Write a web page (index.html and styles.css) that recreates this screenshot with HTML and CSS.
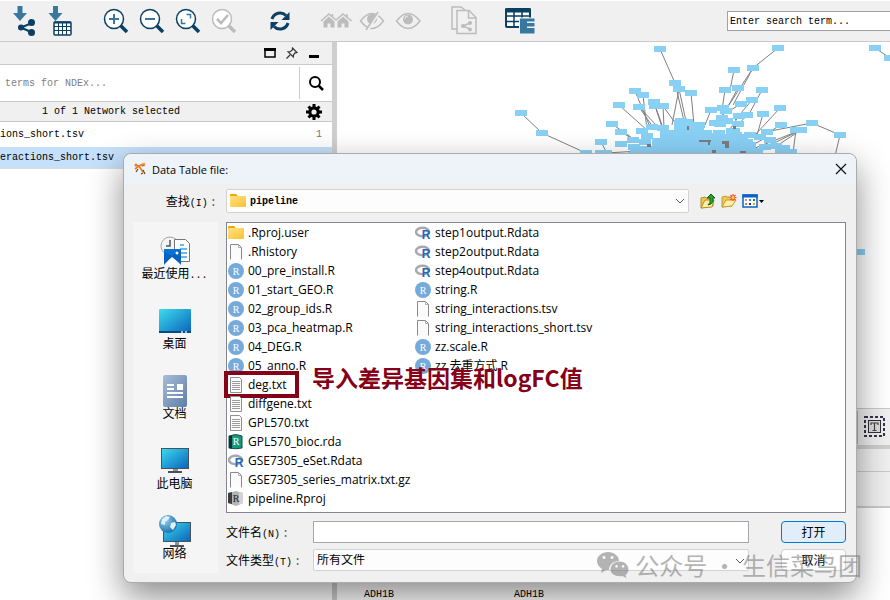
FILE: index.html
```html
<!DOCTYPE html>
<html lang="zh-CN">
<head>
    <meta charset="UTF-8">
    <meta name="viewport" content="width=device-width, initial-scale=1.0">
    <title>Data Table file</title>
    <link rel="stylesheet" href="styles.css">
</head>
<body>
    <!-- Shared icons -->
    <svg class="sprite" aria-hidden="true">
        <defs>
            <linearGradient id="folder-fill" x1="0" y1="0" x2="1" y2="1">
                <stop offset="0" stop-color="#ffe08a"/><stop offset="1" stop-color="#fcc22e"/>
            </linearGradient>
            <linearGradient id="screen-fill" x1="0" y1="0" x2="1" y2="1">
                <stop offset="0" stop-color="#3bdcec"/><stop offset="1" stop-color="#0b62bd"/>
            </linearGradient>
            <linearGradient id="doc-fill" x1="0" y1="0" x2="1" y2="1">
                <stop offset="0" stop-color="#a9bdd6"/><stop offset="1" stop-color="#5c7ea8"/>
            </linearGradient>
            <radialGradient id="globe-fill" cx="0.35" cy="0.3" r="0.8">
                <stop offset="0" stop-color="#8fd0ee"/><stop offset="1" stop-color="#1565a5"/>
            </radialGradient>
        </defs>
        <symbol id="folder" viewBox="0 0 16 16">
            <path d="M0 2q0-1 1-1h5l2 2h7v3H0z" fill="#f2a900"/>
            <rect x="0" y="3" width="16" height="11" rx="1" fill="url(#folder-fill)"/>
        </symbol>
        <symbol id="blank" viewBox="0 0 16 16">
            <path d="M2.500 15.500v-15h8l3 3v12" fill="#fbfbfb" stroke="#8a8a8a"/>
            <path d="M10.500 .5v3h3" fill="none" stroke="#b0b0b0"/>
        </symbol>
        <symbol id="text" viewBox="0 0 16 16">
            <path d="M2.500 .5h9l2 2v13h-11z" fill="#fafafa" stroke="#8f8f8f"/>
            <path d="M4 4.500h8M4 6.500h8M4 8.500h8M4 10.500h8M4 12.500h8" stroke="#9c9c9c"/>
        </symbol>
        <symbol id="rscript" viewBox="0 0 16 16">
            <circle cx="8" cy="8" r="8" fill="#75aadb"/>
            <text x="8" y="12" class="r-letter" fill="#fff">R</text>
        </symbol>
        <symbol id="rdata" viewBox="0 0 16 16">
            <ellipse cx="7.500" cy="7" rx="6.500" ry="4.300" fill="none" stroke="#a7a9b0" stroke-width="2.600"/>
            <text x="11" y="14" class="r-bold" fill="#2467bb">R</text>
        </symbol>
        <symbol id="rda" viewBox="0 0 16 16">
            <path d="M1 2q7-3 13 0v12q-6 1.500-13 0z" fill="#149a80" stroke="#174b43"/>
            <path d="M1 2v12l3 .5V2z" fill="#12322e"/>
            <text x="8" y="11" class="r-letter" fill="#fff">R</text>
        </symbol>
        <symbol id="rproj" viewBox="0 0 16 16">
            <path d="M0 2l8-2 7 2v10l-7 3-8-3z" fill="#b4b4b4"/>
            <path d="M0 2l4-1v12l-4-1z" fill="#3e3e3e"/><path d="M11 1l4 1v10l-4 2z" fill="#d2d2d2"/>
            <text x="8" y="11" class="r-letter" fill="#222">R</text>
        </symbol>
        <symbol id="lens" viewBox="0 0 32 32">
            <circle cx="14" cy="14" r="9.500" fill="#fff" stroke="currentColor" stroke-width="1.500"/>
            <path d="M20.500 20.500l6.500 6.500" stroke="currentColor" stroke-width="3.600"/>
        </symbol>
        <symbol id="chevron" viewBox="0 0 10 6">
            <path d="M1 1l4 4 4-4" fill="none" stroke="#555"/>
        </symbol>
    </svg>

    <!-- Toolbar -->
    <header class="toolbar">
        <div class="tools">
            <button aria-label="Import network"><svg viewBox="0 0 32 32">
                <path d="M9.500 1h5v7H19l-7 8-7-8h4.500z" fill="#38789f"/>
                <path d="M24 18l-11 4.500L24 27.500" fill="none" stroke="#0b3f63" stroke-width="2"/>
                <g fill="#0b3f63"><circle cx="13" cy="22.500" r="3"/><circle cx="23.500" cy="17.500" r="3.500"/><circle cx="23.500" cy="27.500" r="3.500"/></g>
            </svg></button>
            <button aria-label="Import table"><svg viewBox="0 0 32 32">
                <path d="M9 1h5v7h4.500l-7 8-7-8H9z" fill="#38789f"/>
                <rect x="10" y="17" width="17" height="13" rx="1" fill="#fff" stroke="#0b3f63" stroke-width="1.500"/>
                <path d="M10 17.500h17" stroke="#0b3f63" stroke-width="2"/>
                <path d="M10 21.500h17M10 25.500h17M14.500 17v13M18.500 17v13M22.500 17v13" stroke="#0b3f63"/>
            </svg></button>
        </div>
        <div class="tools">
            <button aria-label="Zoom in"><svg viewBox="0 0 32 32"><use href="#lens"/><path d="M14 9v10M9 14h10" stroke="#38789f" stroke-width="2"/></svg></button>
            <button aria-label="Zoom out"><svg viewBox="0 0 32 32"><use href="#lens"/><path d="M9 14h10" stroke="#38789f" stroke-width="2"/></svg></button>
            <button aria-label="Fit content"><svg viewBox="0 0 32 32"><use href="#lens"/><path d="M14.500 9.500h4v4M9.500 14v4.500h4" fill="none" stroke="#38789f" stroke-width="1.500"/></svg></button>
            <button class="off" aria-label="Fit selected"><svg viewBox="0 0 32 32"><use href="#lens"/><path d="M9 14l4 4 7-8" fill="none" stroke="#bcbcbc" stroke-width="2.600"/></svg></button>
        </div>
        <div class="tools">
            <button aria-label="Apply layout"><svg viewBox="0 0 32 32">
                <path d="M8 14a8.300 8.300 0 0 1 14-3.500M24 18a8.300 8.300 0 0 1-14 3.500" fill="none" stroke="#0b3f63" stroke-width="3"/>
                <path d="M25.500 7v8h-8zM6.500 25v-8h8z" fill="#0b3f63"/>
            </svg></button>
        </div>
        <div class="tools off">
            <button aria-label="First neighbors"><svg viewBox="0 0 32 32" fill="#bcbcbc">
                <path d="M3.500 16.500L9 11.500l5.500 5v6h-4v-4h-3v4h-4z"/><path d="M17.500 16.500l5.500-5 5.500 5v6h-4v-4h-3v4h-4z"/>
                <path d="M1 16l8-7 7 6 7-6 8.500 7M12.500 9v4M27 9v4" fill="none" stroke="#bcbcbc" stroke-width="1.500"/>
            </svg></button>
            <button aria-label="Hide selected"><svg viewBox="0 0 32 32">
                <path d="M4.500 16q11.500-15 23 0-11.500 15-23 0z" fill="none" stroke="#bcbcbc" stroke-width="1.500"/>
                <circle cx="16" cy="14" r="5" fill="#bcbcbc"/><path d="M23 7L11 26" stroke="#f0f0f0" stroke-width="3"/><path d="M22 7L10 25" stroke="#bcbcbc" stroke-width="1.500"/>
            </svg></button>
            <button aria-label="Show all"><svg viewBox="0 0 32 32">
                <path d="M4.500 16q11.500-15 23.500 0-12 15-23.500 0z" fill="none" stroke="#bcbcbc" stroke-width="1.500"/>
                <circle cx="16" cy="14.500" r="5" fill="#bcbcbc"/><path d="M13 14q0-3 3-3" fill="none" stroke="#f0f0f0"/>
            </svg></button>
        </div>
        <div class="tools off">
            <button aria-label="New network from selection"><svg viewBox="0 0 32 32" fill="none" stroke="#bcbcbc" stroke-width="1.500">
                <path d="M9 24H4V2h9l4 3"/><path d="M9 5.500h12l7 7V28.500H9z" fill="#f0f0f0"/><path d="M20.500 6v7H28"/>
                <path d="M22 18l-7 3 7 3"/><g fill="#bcbcbc" stroke="none"><circle cx="22" cy="18" r="2"/><circle cx="15" cy="21" r="2"/><circle cx="22" cy="24.500" r="2"/></g>
            </svg></button>
        </div>
        <div class="tools">
            <button aria-label="Table browser"><svg viewBox="0 0 32 32">
                <rect x="2" y="4" width="24" height="18" rx="1" fill="#fff" stroke="#0b3f63" stroke-width="2"/>
                <path d="M1 5.500h26" stroke="#0b3f63" stroke-width="4"/>
                <path d="M2 11h24M2 16.500h24M10 5v17M18 5v17" stroke="#0b3f63" stroke-width="1.500"/>
                <path d="M15 12.500h17V30H15z" fill="#f0f0f0"/><path d="M16 13.500h14.500v3H23v1.500h7.500v3.500H23V23h7.500v5.500H16z" fill="#38789f"/>
            </svg></button>
        </div>
        <input class="search" type="text" aria-label="Search" value="Enter search term...">
    </header>

    <main class="workspace">
        <!-- Network panel -->
        <section class="networks">
            <div class="panel-head">
                <svg width="12" height="12" viewBox="0 0 12 12"><rect x="1" y="2" width="10" height="8" fill="none" stroke="#000" stroke-width="1.500"/><path d="M0 2.500h12" stroke="#000" stroke-width="3"/></svg>
                <svg width="12" height="12" viewBox="0 0 12 12"><path d="M6.500 1l4.500 4.500-2 .3L7.500 8l-.2 2L2 4.700 4.500 4.500 6.300 3zM4 8L.5 11.500" fill="none" stroke="#333" stroke-width="1.200"/></svg>
                <svg width="12" height="12" viewBox="0 0 12 12"><path d="M1 9.500h10" stroke="#000" stroke-width="3"/></svg>
            </div>
            <div class="ndex">
                <input type="text" aria-label="NDEx" placeholder="terms for NDEx...">
                <button aria-label="Search NDEx"><svg width="16" height="16" viewBox="0 0 16 16"><circle cx="7" cy="7" r="5" fill="none" stroke="#000" stroke-width="2"/><path d="M10.500 10.500l4.500 4.500" stroke="#000" stroke-width="2.500"/></svg></button>
            </div>
            <div class="selected">
                <span>1 of 1 Network selected</span>
                <svg width="16" height="16" viewBox="0 0 16 16"><circle cx="8" cy="8" r="4.200" fill="none" stroke="#000" stroke-width="3.200"/><path d="M8 0v3M8 13v3M0 8h3M13 8h3M2.500 2.500l2 2M11.500 11.500l2 2M13.500 2.500l-2 2M4.500 11.500l-2 2" stroke="#000" stroke-width="3"/></svg>
            </div>
            <div class="net"><span>ions_short.tsv</span><i>1</i></div>
            <div class="net current"><span>eractions_short.tsv</span><i>1047</i><i>11297</i></div>
        </section>

        <section class="view">
            <div class="canvas"><svg id="graph" width="553" height="366" viewBox="337 42 553 366"></svg></div>
            <div class="view-bar">
                <span class="view-tab"></span>
                <svg width="22" height="22" viewBox="0 0 22 22"><rect x="1" y="1" width="19" height="19" fill="none" stroke="#33334d" stroke-width="2" stroke-dasharray="3 2"/><rect x="4.500" y="4.500" width="12" height="12" fill="#ddd" stroke="#333"/><path d="M7 9V7h7v2M10.500 7v7.500M8.500 14.500h4" fill="none" stroke="#444" stroke-width="1.200"/></svg>
            </div>
            <div class="table-head"></div>
            <div class="table-tools"></div>
            <div class="table-body"><span>ADH1B</span><span>ADH1B</span></div>
        </section>
    </main>

    <!-- File dialog -->
    <div class="dialog" role="dialog" aria-label="Data Table file:">
        <div class="title-bar">
            <svg width="14" height="14" viewBox="0 0 14 14"><path d="M2 3l4 1 4-2M2 7l4-3 4 6" fill="none" stroke="#e87d1e" stroke-width="1.600"/><path d="M9 4l3-1M3 10l2-3M10 8l2 4M8 12l2-1" stroke="#70401c" stroke-width="1.200"/><circle cx="11" cy="2" r="1.500" fill="#f4a63a"/><circle cx="3" cy="3" r="1.500" fill="#e87d1e"/></svg>
            <span>Data Table file:</span>
            <button class="close" aria-label="Close"><svg width="12" height="12" viewBox="0 0 12 12"><path d="M1 1l10 10M11 1L1 11" stroke="#111" stroke-width="1.200"/></svg></button>
        </div>
        <div class="look-in">
            <label for="folder-select">查找<small>(I)</small><b>:</b></label>
            <div class="combo with-icon">
                <svg class="combo-icon" width="16" height="16"><use href="#folder"/></svg>
                <select id="folder-select"><option>pipeline</option></select>
                <svg class="arrow" width="10" height="6"><use href="#chevron"/></svg>
            </div>
            <div class="nav">
                <button aria-label="Up one level"><svg width="16" height="16" viewBox="0 0 16 16"><path d="M1 15V5l4-1 1 1h6l1 2v6z" fill="#edc757" stroke="#b38c2b"/><path d="M1 15l4-8h9l-2 7z" fill="#fff0a5" stroke="#b38c2b"/><path d="M8 12q3-2 2-7H7l4-4 4 4h-2q1 6-5 7z" fill="#28a228" stroke="#12651b"/></svg></button>
                <button aria-label="New folder"><svg width="16" height="16" viewBox="0 0 16 16"><path d="M1 14V4l4-1 1 1h5v9z" fill="#edc757" stroke="#c39b35"/><path d="M1 14l4-7h10l-4 6z" fill="#fff0a5" stroke="#c39b35"/><path d="M12 1v7M8.500 4.500h7M9.500 2l5 5M14.500 2l-5 5" stroke="#f0502a" stroke-width="1.200"/><circle cx="12" cy="4.500" r="1.500" fill="#ffd25a"/></svg></button>
                <button aria-label="View menu"><svg width="24" height="16" viewBox="0 0 24 16"><rect x="1" y="2" width="14" height="12" fill="#fff" stroke="#0a62c4" stroke-width="1.500"/><path d="M.3 3h15.400" stroke="#0a62c4" stroke-width="3"/><path d="M3 6h2v2H3z" fill="#a09ac4"/><path d="M7 6h2v2H7z" fill="#2b8ce6"/><path d="M11 6h2v2h-2z" fill="#17921b"/><path d="M3 10h2v2H3z" fill="#f07346"/><path d="M7 10h2v2H7z" fill="#163a9c"/><path d="M11 10h2v2h-2z" fill="#d8a21b"/><path d="M17 7h5l-2.500 3z"/></svg></button>
            </div>
        </div>
        <div class="dialog-body">
            <nav class="places">
                <button>
                    <svg width="32" height="32" viewBox="0 0 32 32"><circle cx="11" cy="11" r="9" fill="#f4f4f4" stroke="#a5a5a5"/><path d="M11 5v6H7" fill="none" stroke="#555" stroke-width="1.500"/><path d="M15.500 4.500h11l4 4v18h-15z" fill="#fff" stroke="#777"/><path d="M21 10h4M21 14h7M21 18h7M21 22h7" stroke="#3ba4e8" stroke-width="1.500"/><path d="M5 14h17v16H5z" fill="#0873d4"/><path d="M5 30l8-9 9 9z" fill="#fff"/><path d="M5 29V17l8 4 6-6 3 3v11l-9-7z" fill="#0562bd"/><circle cx="18" cy="18" r="1.500" fill="#fff"/></svg>
                    <span>最近使用<small>...</small></span>
                </button>
                <button>
                    <svg width="32" height="32" viewBox="0 0 32 32"><rect x="0" y="4" width="32" height="24" rx="1" fill="url(#screen-fill)"/><path d="M0 27h32" stroke="#0a4a80" stroke-width="2"/><path d="M22 27h2M26 27h2" stroke="#cfe6f5" stroke-width="1.500"/></svg>
                    <span>桌面</span>
                </button>
                <button>
                    <svg width="32" height="32" viewBox="0 0 32 32"><rect x="4" y="0" width="24" height="32" rx="2" fill="url(#doc-fill)"/><path d="M8 10h7M8 14h7M8 18h16M8 22h16" stroke="#fff" stroke-width="2"/><path d="M18 9h6v6h-6z" fill="#fff"/></svg>
                    <span>文档</span>
                </button>
                <button>
                    <svg width="32" height="32" viewBox="0 0 32 32"><path d="M14 23h5v4h-5z" fill="#8d959c"/><path d="M9 27h14" stroke="#48525c" stroke-width="2"/><rect x="2.500" y="3.500" width="27" height="20" fill="url(#screen-fill)" stroke="#48525c"/></svg>
                    <span>此电脑</span>
                </button>
                <button>
                    <svg width="32" height="32" viewBox="0 0 32 32"><path d="M16 26h4v4h-4z" fill="#8d959c"/><path d="M11 31h14" stroke="#48525c" stroke-width="2"/><rect x="4.500" y="7.500" width="27" height="19" fill="url(#screen-fill)" stroke="#48525c"/><circle cx="9" cy="9" r="9" fill="url(#globe-fill)"/><path d="M3 4l4-3 4 1-2 3-3 2v3l-4-1zM12 8l4-1 1 3-3 5-3-3z" fill="#dff1f7"/></svg>
                    <span>网络</span>
                </button>
            </nav>
            <div class="picker">
                <ul class="files">
                    <li><svg><use href="#folder"/></svg>.Rproj.user</li>
                    <li><svg><use href="#blank"/></svg>.Rhistory</li>
                    <li><svg><use href="#rscript"/></svg>00_pre_install.R</li>
                    <li><svg><use href="#rscript"/></svg>01_start_GEO.R</li>
                    <li><svg><use href="#rscript"/></svg>02_group_ids.R</li>
                    <li><svg><use href="#rscript"/></svg>03_pca_heatmap.R</li>
                    <li><svg><use href="#rscript"/></svg>04_DEG.R</li>
                    <li><svg><use href="#rscript"/></svg>05_anno.R</li>
                    <li class="marked"><svg><use href="#text"/></svg>deg.txt<strong class="note">导入差异基因集和logFC值</strong></li>
                    <li><svg><use href="#text"/></svg>diffgene.txt</li>
                    <li><svg><use href="#text"/></svg>GPL570.txt</li>
                    <li><svg><use href="#rda"/></svg>GPL570_bioc.rda</li>
                    <li><svg><use href="#rdata"/></svg>GSE7305_eSet.Rdata</li>
                    <li><svg><use href="#blank"/></svg>GSE7305_series_matrix.txt.gz</li>
                    <li><svg><use href="#rproj"/></svg>pipeline.Rproj</li>
                    <li><svg><use href="#rdata"/></svg>step1output.Rdata</li>
                    <li><svg><use href="#rdata"/></svg>step2output.Rdata</li>
                    <li><svg><use href="#rdata"/></svg>step4output.Rdata</li>
                    <li><svg><use href="#rscript"/></svg>string.R</li>
                    <li><svg><use href="#blank"/></svg>string_interactions.tsv</li>
                    <li><svg><use href="#blank"/></svg>string_interactions_short.tsv</li>
                    <li><svg><use href="#rscript"/></svg>zz.scale.R</li>
                    <li><svg><use href="#rscript"/></svg>zz.去重方式.R</li>
                </ul>
                <div class="fields">
                    <label for="file-name">文件名<small>(N)</small><b>:</b></label>
                    <input id="file-name" type="text">
                    <button class="open">打开</button>
                    <label for="file-type">文件类型<small>(T)</small><b>:</b></label>
                    <div class="combo">
                        <select id="file-type"><option>所有文件</option></select>
                        <svg class="arrow" width="10" height="6"><use href="#chevron"/></svg>
                    </div>
                    <button>取消</button>
                </div>
            </div>
        </div>
    </div>

    <div class="watermark">
        <svg width="32" height="28" viewBox="0 0 32 28"><path fill-rule="evenodd" d="M11 1c6 0 11 4 11 9-6 0-10 4-10 9l-3 0-5 3 1-4c-3-2-5-5-5-8 0-5 5-9 11-9zM7 5a1.500 1.500 0 1 0 .1 0zM15 5a1.500 1.500 0 1 0 .1 0z"/><path fill-rule="evenodd" d="M22.500 10.500c5 0 9 3.500 9 8 0 2-1 4-3 5.500l1 3-4-2c-7 1-12-2-12-6.500s4-8 9-8zM19.500 14a1.300 1.300 0 1 0 .1 0zM26 14a1.300 1.300 0 1 0 .1 0z"/></svg>
        <span>公众号 · 生信菜鸟团</span>
    </div>

    <script>
        // Node centers on the canvas
        const nodes = [
            [660, 49], [778, 48], [875, 48], [890, 58], [753, 68], [734, 70], [675, 83], [679, 89],
            [691, 93], [725, 90], [738, 88], [762, 90], [635, 91], [643, 95], [654, 102], [619, 105],
            [639, 107], [655, 106], [663, 106], [752, 100], [741, 104], [780, 108], [711, 110], [723, 108],
            [726, 111], [763, 114], [722, 118], [739, 116], [747, 115], [612, 124], [621, 132], [781, 125],
            [812, 123], [801, 130], [796, 130], [840, 135], [601, 142], [652, 127], [663, 128], [642, 131],
            [647, 136], [681, 121], [687, 122], [699, 125], [715, 123], [727, 121], [738, 124], [720, 124],
            [714, 136], [719, 133], [736, 135], [750, 135], [767, 132], [760, 137], [770, 140], [633, 140],
            [621, 144], [634, 147], [645, 142], [636, 152], [747, 142], [765, 147], [776, 146], [784, 148],
            [757, 151], [781, 152], [791, 152], [601, 153], [606, 153], [586, 153], [542, 133], [521, 113],
            [859, 252], [851, 272]
        ];
        const edges = [
            [660, 49, 675, 83], [778, 48, 753, 68], [753, 68, 727, 108], [734, 70, 730, 90], [875, 48, 890, 58],
            [675, 83, 684, 121], [679, 89, 672, 125], [691, 93, 694, 125], [635, 91, 650, 127], [643, 95, 647, 130],
            [654, 102, 663, 128], [619, 105, 648, 131], [639, 107, 653, 127], [655, 106, 662, 127], [663, 106, 664, 127],
            [663, 106, 676, 124], [725, 90, 722, 110], [738, 88, 726, 110], [762, 90, 748, 116], [752, 100, 735, 120],
            [741, 104, 722, 115], [780, 108, 755, 135], [763, 114, 757, 135], [711, 110, 705, 125], [612, 124, 638, 142],
            [621, 132, 640, 143], [781, 125, 760, 137], [812, 123, 765, 132], [812, 123, 840, 135], [840, 135, 835, 156],
            [801, 130, 770, 145], [801, 130, 775, 147], [796, 130, 793, 153], [601, 142, 607, 153], [606, 153, 640, 151],
            [521, 113, 542, 133], [542, 133, 586, 153], [735, 155, 765, 138], [735, 155, 784, 146], [745, 152, 801, 130],
            [753, 68, 733, 105], [679, 89, 686, 121], [639, 107, 659, 128], [747, 115, 735, 128], [739, 116, 728, 132]
        ];
        // Dense spots where the edges run together
        const dark = [[687, 126, 2, 4], [699, 140, 12, 2], [708, 142, 2, 3], [722, 141, 7, 3], [725, 144, 4, 4], [712, 150, 4, 4], [647, 144, 4, 3], [740, 151, 6, 2], [733, 126, 3, 3]];

        const lines = edges.map(e => `<line x1="${e[0]}" y1="${e[1]}" x2="${e[2]}" y2="${e[3]}"/>`).join('');
        const boxes = nodes.map(n => `<rect x="${n[0] - 6}" y="${n[1] - 3}" width="12" height="6"/>`).join('');
        const gaps = dark.map(d => `<rect x="${d[0]}" y="${d[1]}" width="${d[2]}" height="${d[3]}"/>`).join('');

        document.getElementById('graph').innerHTML =
            `<g class="edges">${lines}</g>
            <path class="nodes" d="M628 156v-4h12v-6h12v-8h8v-8h14v-10h18v4h12v6h8v4h14v-6h14v6h8v8h8v14z"/>
            <g class="nodes">${boxes}</g><g class="gaps">${gaps}</g>`;
    </script>
</body>
</html>
```
FILE: styles.css
```css
* {
    box-sizing: border-box;
    margin: 0;
    padding: 0;
}

body {
    position: relative;
    display: flex;
    flex-direction: column;
    height: 100vh;
    overflow: hidden;
    background: #fff;
    color: #000;
    font-family: "Liberation Mono", "Noto Sans CJK SC", monospace;
    font-size: 10px;
}

button,
input,
select {
    font: inherit;
    color: inherit;
}

button {
    border: none;
    background: none;
}

small {
    font-size: 10px;
}

svg {
    flex: none;
}

.sprite {
    position: absolute;
    width: 0;
    height: 0;
}

.r-letter {
    font: 10px "Liberation Serif", serif;
    text-anchor: middle;
}

.r-bold {
    font: bold 12px "Liberation Sans", sans-serif;
    text-anchor: middle;
}

/* Toolbar */
.toolbar {
    display: flex;
    align-items: center;
    gap: 20px;
    height: 42px;
    padding-left: 6px;
    background: #f0f0f0;
    border-top: 1px solid #fff;
    border-bottom: 1px solid #cacaca;
    flex: none;
}

.tools {
    display: flex;
    color: #0b3f63;
}

.tools button {
    display: flex;
    justify-content: center;
    width: 36px;
}

.tools svg {
    width: 32px;
    height: 32px;
}

.tools .off,
.tools.off {
    color: #bcbcbc;
}

.search {
    width: 163px;
    height: 20px;
    margin-left: auto;
    padding: 0 2px;
    border: 1px solid #a0a0a0;
    border-right: none;
    background: #fff;
}

.workspace {
    display: flex;
    flex: 1;
    min-height: 0;
}

/* Network panel */
.networks {
    width: 337px;
    border-right: 5px solid #cfcfcf;
    flex: none;
}

.panel-head {
    display: flex;
    align-items: center;
    justify-content: flex-end;
    gap: 10px;
    height: 23px;
    padding-right: 12px;
    background: #f0f0f0;
    border-bottom: 1px solid #cacaca;
}

.ndex {
    display: flex;
    height: 37px;
    border-bottom: 1px solid #cacaca;
}

.ndex input {
    flex: 1;
    min-width: 0;
    padding-left: 5px;
    border: none;
}

.ndex input::placeholder {
    color: #808080;
}

.ndex button {
    display: flex;
    align-items: center;
    justify-content: center;
    width: 33px;
    margin: 2px 0;
    border-left: 1px solid #cacaca;
}

.selected {
    display: flex;
    align-items: center;
    justify-content: space-between;
    height: 20px;
    padding: 0 10px 0 42px;
    background: #f0f0f0;
    border-bottom: 1px solid #cacaca;
}

.net {
    display: flex;
    align-items: center;
    gap: 10px;
    height: 22px;
    margin-top: 1px;
    padding-right: 10px;
}

.net span {
    flex: 1;
}

.net i {
    color: #777;
    font-style: normal;
}

.net.current {
    margin-top: 2px;
    background: #c5e0fa;
    border-bottom: 1px solid #dcdcdc;
}

/* Network view and table panel */
.view {
    display: flex;
    flex-direction: column;
    flex: 1;
    min-width: 0;
}

.canvas {
    height: 366px;
    overflow: hidden;
}

.edges {
    stroke: #808080;
    stroke-width: 1;
}

.nodes {
    fill: #89d0f5;
    shape-rendering: crispEdges;
}

.gaps {
    fill: #7d7d7d;
}

.view-bar {
    display: flex;
    align-items: center;
    justify-content: flex-end;
    gap: 6px;
    height: 37px;
    padding-right: 4px;
    background: #f0f0f0;
    border-top: 1px solid #cacaca;
}

.view-tab {
    width: 60px;
    height: 33px;
    border: 2px solid #b4b4b4;
}

.table-head {
    height: 27px;
    background: #f0f0f0;
    border-top: 4px solid #cfcfcf;
    border-bottom: 1px solid #cacaca;
}

.table-tools {
    height: 36px;
    background: #f0f0f0;
    border-bottom: 2px solid #cacaca;
}

.table-body {
    display: grid;
    grid-template-columns: 150px 150px;
    align-items: end;
    flex: 1;
    padding-left: 27px;
}

/* File dialog */
.dialog {
    position: absolute;
    top: 153px;
    left: 123px;
    right: 33px;
    background: #f0f0f0;
    border: 1px solid #a9abad;
    border-radius: 8px;
    box-shadow: 0 14px 34px rgba(0, 0, 0, 0.45);
    font-size: 12px;
}

.title-bar {
    display: flex;
    align-items: center;
    gap: 5px;
    height: 30px;
    padding: 0 9px;
    background: #eef3fa;
    border-radius: 8px 8px 0 0;
    font-family: "Open Sans", sans-serif;
    font-size: 11px;
}

.close {
    display: flex;
    margin-left: auto;
}

label b {
    padding-left: 2px;
    font-weight: normal;
    color: #666;
}

.look-in {
    display: grid;
    grid-template-columns: 84px 1fr 150px;
    align-items: center;
    column-gap: 9px;
    height: 38px;
    padding: 0 8px 4px 9px;
}

.look-in label {
    text-align: right;
}

label {
    white-space: nowrap;
}

.combo {
    position: relative;
}

.combo select {
    display: block;
    width: 100%;
    height: 22px;
    padding: 2px 20px 0 3px;
    border: 1px solid #d2d2d2;
    border-radius: 2px;
    background: #fdfdfd;
    appearance: none;
}

.combo.with-icon select {
    height: 24px;
    padding: 0 20px 0 23px;
    font-size: 10px;
    font-weight: bold;
}

.combo-icon {
    position: absolute;
    top: 4px;
    left: 4px;
}

.arrow {
    position: absolute;
    top: 9px;
    right: 4px;
}

.nav {
    display: flex;
    gap: 5px;
    padding-left: 2px;
}

.nav button {
    display: flex;
}

.dialog-body {
    display: flex;
    gap: 8px;
    padding: 0 10px 9px 9px;
}

.places {
    display: flex;
    flex-direction: column;
    width: 85px;
    padding: 13px 2px 0 0;
    background: #f5f5f5;
}

.places button {
    display: flex;
    flex-direction: column;
    align-items: center;
    height: 70px;
    line-height: 17px;
}

.places button:last-child {
    height: 58px;
}

.picker {
    flex: 1;
    min-width: 0;
}

.files {
    display: grid;
    grid-auto-flow: column;
    grid-template-rows: repeat(15, 19px);
    grid-auto-columns: 187px;
    padding: 0 0 4px 1px;
    list-style: none;
    background: #fff;
    border: 1px solid #828790;
    font-family: "Open Sans", "Noto Sans CJK SC", sans-serif;
}

.files li {
    position: relative;
    display: flex;
    align-items: center;
    gap: 4px;
    line-height: 19px;
    white-space: nowrap;
}

.files svg {
    width: 16px;
    height: 16px;
}

/* Red frame with its note */
.marked::after {
    content: "";
    position: absolute;
    box-sizing: border-box;
    top: -4px;
    left: -4px;
    width: 75px;
    height: 27px;
    border: 4px solid #860018;
}

.note {
    position: absolute;
    top: -16px;
    left: 84px;
    z-index: 1;
    color: #860018;
    font-family: "Noto Sans CJK SC", sans-serif;
    font-size: 23px;
    line-height: 36px;
}

.fields {
    display: grid;
    grid-template-columns: 79px 1fr 65px;
    align-items: center;
    column-gap: 8px;
    row-gap: 6px;
    padding-top: 8px;
}

.fields input,
.fields .combo {
    margin-right: 24px;
}

.fields input {
    height: 22px;
    border: 1px solid #a5a8ad;
    background: #fff;
}

.fields button {
    height: 22px;
    border: 1px solid #d0d0d0;
    border-radius: 4px;
    background: #fdfdfd;
}

.fields .open {
    border-color: #0078d4;
    background: #e0eef9;
}

.watermark {
    position: absolute;
    right: 28px;
    bottom: 17px;
    display: flex;
    align-items: center;
    gap: 6px;
    color: #777;
    fill: #777;
    opacity: 0.55;
    font-family: "Noto Sans CJK SC", sans-serif;
    font-size: 24px;
    line-height: 36px;
    white-space: nowrap;
}
```
